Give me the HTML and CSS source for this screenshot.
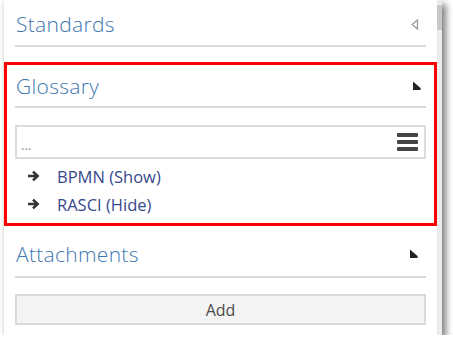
FILE: index.html
```html
<!DOCTYPE html>
<html>
  <head>
    <title>Properties</title>
    <link rel="stylesheet" href="styles.css">
  </head>

  <body>
    <div class="panel">
      <div class="content">
        <div class="section-header">
          <span class="section-title">Standards</span>
          <svg class="toggle" width="8" height="11" viewBox="0 0 8 11">
            <polygon points="6.5,1 6.5,10 1.2,5.5" fill="none" stroke="#a0a0a0" stroke-width="1.4" />
          </svg>
        </div>

        <div class="section highlight">
          <div class="section-header">
            <span class="section-title">Glossary</span>
            <svg class="toggle" width="10" height="10" viewBox="0 0 10 10">
              <path d="M1 0.5 L8.5 7 Q9.5 8.5 8 9 L1 9 Z" fill="#222" />
            </svg>
          </div>
          <div class="search-box">
            <span class="search-text">...</span>
            <span class="menu-icon">
              <span></span>
              <span></span>
              <span></span>
            </span>
          </div>
          <ul class="item-list">
            <li>
              <svg class="arrow" width="13" height="12" viewBox="0 0 13 12">
                <path d="M1 6 H10 M6 1.6 L10.6 6 L6 10.4" fill="none" stroke="#333" stroke-width="2.6" />
              </svg>
              <span>BPMN (Show)</span>
            </li>
            <li>
              <svg class="arrow" width="13" height="12" viewBox="0 0 13 12">
                <path d="M1 6 H10 M6 1.6 L10.6 6 L6 10.4" fill="none" stroke="#333" stroke-width="2.6" />
              </svg>
              <span>RASCI (Hide)</span>
            </li>
          </ul>
        </div>

        <div class="section">
          <div class="section-header tall">
            <span class="section-title">Attachments</span>
            <svg class="toggle" width="10" height="10" viewBox="0 0 10 10">
              <path d="M1 0.5 L8.5 7 Q9.5 8.5 8 9 L1 9 Z" fill="#222" />
            </svg>
          </div>
          <button class="button">Add</button>
        </div>
      </div>
      <div class="scrollbar"><div class="thumb"></div></div>
    </div>
  </body>
</html>
```

FILE: styles.css
```css
body {
  font-family: "Open Sans", "Noto Sans", sans-serif;
  background-color: #fff;
  margin: 0;
}

.panel {
  display: flex;
  width: 438px;
  height: 335px;
  margin-left: 4px;
  background: white;
  box-shadow: 4px 4px 7px rgba(0, 0, 0, 0.5), -1px 1px 3px rgba(0, 0, 0, 0.08);
}

.content {
  width: 433px;
}

.scrollbar {
  width: 5px;
  background: #ececec;
  padding-top: 5px;
}

.thumb {
  height: 25px;
  background: #c8c8c8;
}

.section-header {
  display: flex;
  justify-content: space-between;
  align-items: center;
  margin: 0 11px;
  padding: 3px 7px 0 1px;
  box-sizing: border-box;
  height: 47px;
  border-bottom: 2px solid #dadada;
}

.section-header.tall {
  height: 52px;
  padding-top: 5px;
}

.section-title {
  font-size: 21px;
  font-weight: 300;
  color: #4176b0;
  letter-spacing: 0.3px;
}

.toggle {
  display: block;
}

.highlight {
  border: 3px solid #ff0000;
  margin-top: 15px;
  padding-bottom: 5px;
}

.highlight .section-header {
  height: 43px;
  margin: 0 8px;
  padding: 0 4px 0 1px;
}

.search-box {
  display: flex;
  justify-content: space-between;
  align-items: center;
  height: 30px;
  margin: 17px 8px 0;
  padding: 0 6px 0 4px;
  border: 2px solid #dcdcdc;
}

.search-text {
  font-size: 13px;
  color: #888;
  padding-top: 6px;
}

.menu-icon {
  display: flex;
  flex-direction: column;
  gap: 3px;
}

.menu-icon span {
  display: block;
  width: 21px;
  height: 4px;
  background: #444;
  border-radius: 1px;
}

.item-list {
  list-style: none;
  margin: 3px 0 0;
  padding: 0 0 0 20px;
}

.item-list li {
  display: flex;
  align-items: center;
  height: 28px;
  font-size: 16.5px;
  color: #36488c;
}

.arrow {
  margin-right: 17px;
}

.button {
  display: block;
  width: 411px;
  height: 31px;
  margin: 16px 11px 0;
  font-family: "Open Sans", "Noto Sans", sans-serif;
  font-size: 16px;
  color: #4a4a4a;
  background-color: #f4f4f4;
  border: 2px solid #dadada;
  cursor: pointer;
}
```
